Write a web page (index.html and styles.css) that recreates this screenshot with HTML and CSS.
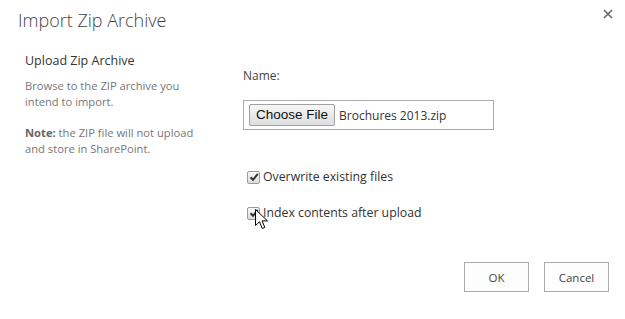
FILE: index.html
```html
<!DOCTYPE html>
<html>
<head>
    <meta charset="UTF-8">
    <title>Import Zip Archive</title>
    <link rel="stylesheet" href="styles.css">
</head>
<body>
    <div class="dialog">
        <div class="dialog-head">
            <h1 class="dialog-title">Import Zip Archive</h1>
            <button class="close-btn" aria-label="Close">
                <svg width="10" height="10" viewBox="0 0 10 10">
                    <path d="M1 1 L9 9 M9 1 L1 9" stroke="#666" stroke-width="1.6" fill="none"/>
                </svg>
            </button>
        </div>

        <div class="dialog-body">
            <div class="section-info">
                <h2 class="section-title">Upload Zip Archive</h2>
                <p class="section-desc">Browse to the ZIP archive you intend to import.</p>
                <p class="section-desc"><b>Note:</b> the ZIP file will not upload and store in SharePoint.</p>
            </div>

            <div class="section-fields">
                <div class="field-label">Name:</div>
                <div class="file-box">
                    <span class="file-btn">Choose File</span>
                    <span class="file-name">Brochures 2013.zip</span>
                </div>

                <label class="check-row">
                    <span class="check-box">
                        <svg width="10" height="10" viewBox="0 0 10 10">
                            <path d="M1.5 5.2 L4 7.8 L8.8 1.8" stroke="#333" stroke-width="2" fill="none"/>
                        </svg>
                    </span>
                    <span>Overwrite existing files</span>
                </label>
                <label class="check-row last">
                    <span class="check-box">
                        <svg width="10" height="10" viewBox="0 0 10 10">
                            <path d="M1.5 5.2 L4 7.8 L8.8 1.8" stroke="#333" stroke-width="2" fill="none"/>
                        </svg>
                    </span>
                    <span>Index contents after upload</span>
                    <svg class="cursor" width="14" height="22" viewBox="0 0 14 22">
                        <path d="M0.5 0.5 L0.5 16.5 L4.5 12.8 L7.3 19.5 L9.8 18.4 L7.1 11.9 L12.5 11.9 Z" fill="#fff" stroke="#000" stroke-width="1"/>
                    </svg>
                </label>
            </div>
        </div>

        <div class="dialog-actions">
            <button class="action-btn">OK</button>
            <button class="action-btn">Cancel</button>
        </div>
    </div>
</body>
</html>
```

FILE: styles.css
```css
body {
    margin: 0;
    background: #fff;
    font-family: "Open Sans", "Noto Sans", sans-serif;
    color: #444;
}

.dialog {
    width: 625px;
    height: 319px;
    box-sizing: border-box;
    padding: 6px 12px 0 18px;
}

.dialog-head {
    display: flex;
    justify-content: space-between;
    align-items: flex-start;
}

.dialog-title {
    margin: 0;
    font-size: 18px;
    font-weight: 300;
    color: #444;
    line-height: 28px;
}

.close-btn {
    border: none;
    background: none;
    padding: 0;
    margin: 0;
    width: 10px;
    height: 10px;
    line-height: 0;
    margin-top: 3px;
    cursor: pointer;
}

.dialog-body {
    display: flex;
    margin-top: 18px;
}

.section-info {
    width: 182px;
    padding-left: 7px;
    margin-right: 36px;
}

.section-title {
    margin: 0 0 8px;
    font-size: 12.5px;
    font-weight: 400;
    color: #333;
    line-height: 18px;
}

.section-desc {
    margin: 0 0 15px;
    font-size: 11.2px;
    line-height: 16px;
    color: #777;
}

.section-desc b {
    font-weight: 700;
    color: #666;
}

.section-fields {
    padding-top: 15px;
}

.field-label {
    font-size: 12px;
    color: #444;
    line-height: 18px;
}

.file-box {
    display: flex;
    align-items: center;
    width: 251px;
    height: 30px;
    box-sizing: border-box;
    margin-top: 15px;
    padding-left: 5px;
    border: 1px solid #ababab;
}

.file-btn {
    font-family: "Liberation Sans", Arial, sans-serif;
    font-size: 13.5px;
    color: #111;
    padding: 2px 6px;
    border: 1px solid #a0a0a0;
    border-radius: 2px;
    background: linear-gradient(#f6f6f6, #dedede);
    line-height: 16px;
}

.file-name {
    margin-left: 4px;
    font-size: 12px;
    color: #333;
}

.check-row {
    display: flex;
    align-items: center;
    position: relative;
    margin-top: 38px;
    font-size: 12.3px;
    color: #333;
    line-height: 18px;
}

.check-row.last {
    margin-top: 18px;
}

.check-box {
    display: flex;
    align-items: center;
    justify-content: center;
    width: 11px;
    height: 11px;
    margin: 0 3px 0 4px;
    border: 1px solid #9a9a9a;
    border-radius: 2px;
    background: linear-gradient(#fafafa, #dcdcdc);
}

.cursor {
    position: absolute;
    left: 12px;
    top: 5px;
}

.dialog-actions {
    display: flex;
    justify-content: flex-end;
    gap: 15px;
    margin-top: 40px;
    padding-right: 4px;
}

.action-btn {
    width: 65px;
    height: 30px;
    background: #fdfdfd;
    border: 1px solid #ababab;
    font-family: "Open Sans", "Noto Sans", sans-serif;
    font-size: 11.5px;
    color: #444;
    cursor: pointer;
}
```
